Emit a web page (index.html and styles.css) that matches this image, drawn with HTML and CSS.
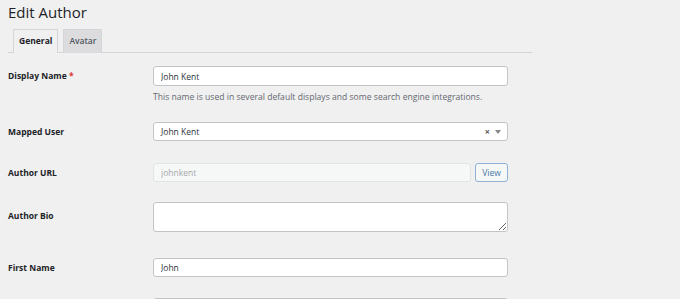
FILE: index.html
```html
<!DOCTYPE html>
<html>
<head>
  <meta charset="utf-8">
  <title>Edit Author</title>
  <link rel="stylesheet" href="styles.css">
</head>
<body>
  <h1>Edit Author</h1>
  <div class="tabs">
    <a class="tab active">General</a>
    <a class="tab">Avatar</a>
  </div>

  <div class="form">
    <div class="row row-desc">
      <label>Display Name <span class="req">*</span></label>
      <div class="field">
        <input class="text" value="John Kent">
        <p class="desc">This name is used in several default displays and some search engine integrations.</p>
      </div>
    </div>
    <div class="row">
      <label>Mapped User</label>
      <div class="field">
        <div class="select">
          <span>John Kent</span>
          <span class="clear">×</span>
          <span class="arrow"></span>
        </div>
      </div>
    </div>
    <div class="row row-url">
      <label>Author URL</label>
      <div class="field url">
        <input class="text" value="johnkent" disabled>
        <button class="btn">View</button>
      </div>
    </div>
    <div class="row row-bio">
      <label>Author Bio</label>
      <div class="field">
        <textarea></textarea>
      </div>
    </div>
    <div class="row row-first">
      <label>First Name</label>
      <div class="field">
        <input class="text short" value="John">
      </div>
    </div>
    <div class="row">
      <label></label>
      <div class="field">
        <input class="text">
      </div>
    </div>
  </div>
</body>
</html>
```

FILE: styles.css
```css
body { margin: 0; padding: 0 8px; background: #f0f0f1; font-family: 'Open Sans', 'Noto Sans', sans-serif; color: #1d2327; font-size: 8.5px; overflow: hidden; }
h1 { font-size: 15px; font-weight: 400; margin: 0; padding-top: 1px; line-height: 22px; height: 28px; }
.tabs { display: flex; gap: 5px; width: 519px; padding-left: 5px; border-bottom: 1px solid #d4d5d8; height: 23px; }
.tab { box-sizing: border-box; height: 24px; padding: 0 5px; line-height: 22px; font-weight: 600; font-size: 8.5px; color: #50575e; background: #dcdcde; border: 1px solid #d4d5d8; border-bottom: none; }
.tab.active { background: #f0f0f1; color: #1d2327; font-weight: 700; }
.form { padding-top: 13px; }
.row { display: flex; margin-bottom: 21px; }
.row-desc { margin-bottom: 18px; }
.row-url { margin-bottom: 19px; }
.row-bio { margin-bottom: 26px; }
.row-first { margin-bottom: 20px; }
.row label { width: 145px; flex: none; font-weight: 700; line-height: 20px; }
.row-bio label { padding-top: 4px; }
.req { color: #d63638; }
.field { width: 355px; }
.text { box-sizing: border-box; width: 355px; height: 20px; margin: 0; padding: 0 7px; font: inherit; color: #2c3338; background: #fff; border: 1px solid #c3c4c7; border-radius: 3px; outline: none; }
.text.short { height: 19px; }
.desc { margin: 4px 0 0; line-height: 14px; font-size: 8.6px; color: #646970; }
.select { box-sizing: border-box; height: 19px; display: flex; align-items: center; padding: 0 6px 0 7px; background: #fff; border: 1px solid #c3c4c7; border-radius: 3px; color: #2c3338; }
.select span:first-child { flex: 1; }
.clear { font-size: 9px; font-weight: 700; color: #555; margin-right: 5px; }
.arrow { border: 3px solid transparent; border-top: 4px solid #888; border-bottom: 0; }
.url { display: flex; gap: 4px; }
.url .text { width: 318px; height: 19px; background: #f6f7f7; border-color: #e2e3e5; color: #a7aaad; }
.btn { box-sizing: border-box; height: 19px; width: 33px; padding: 0; font: inherit; color: #4a77a8; background: #f6f7f7; border: 1px solid #8eb1d4; border-radius: 3px; }
textarea { box-sizing: border-box; display: block; width: 355px; height: 30px; margin: 0; background: #fff; border: 1px solid #c3c4c7; border-radius: 3px; }
```
